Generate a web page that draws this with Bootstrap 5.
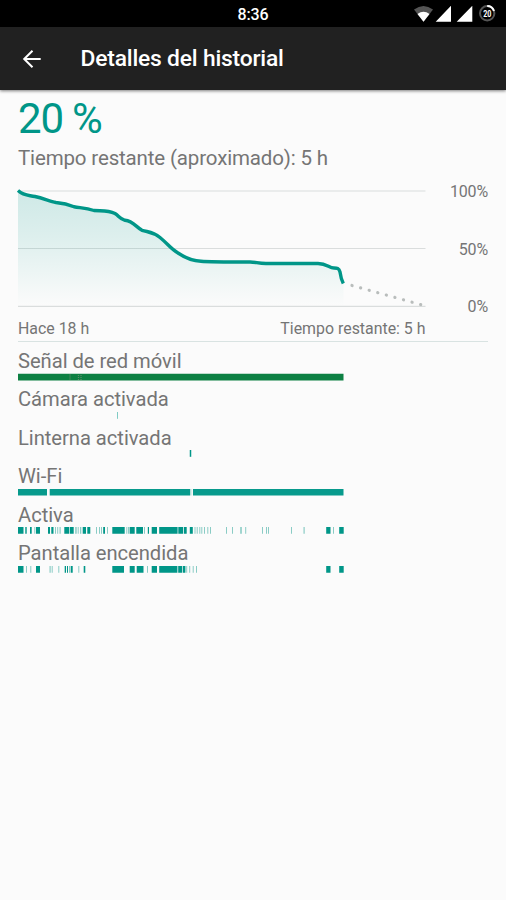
<!DOCTYPE html>
<html lang="es">
<head>
<meta charset="utf-8">
<meta name="viewport" content="width=device-width, initial-scale=1">
<title>Detalles del historial</title>
<link href="https://cdn.jsdelivr.net/npm/bootstrap@5.3.0/dist/css/bootstrap.min.css" rel="stylesheet">
<style>
body{font-family:Roboto,"Noto Sans",sans-serif;background:#fbfbfb;color:#757575;min-height:900px;overflow:hidden}
.status-bar{height:27px;background:#000;color:#fff;display:grid;grid-template-columns:1fr auto 1fr;font-size:16px;font-weight:500;line-height:29px;letter-spacing:-.15px}
.app-bar{height:63px;background:#212121;color:#fff;box-shadow:0 1px 3px rgba(0,0,0,.5);padding-left:18px}
.app-title{font-size:22.8px;font-weight:500;line-height:64px;margin:0 0 0 34.5px;letter-spacing:-.18px}
.content{padding:0 18px}
.level{font-size:42px;line-height:50px;color:#009688;padding-top:4px;letter-spacing:-1.2px}
.remain{font-size:20.5px;line-height:28px;letter-spacing:-.15px}
.chart-area{height:135px}
.chart-area svg{width:408px;height:135px;overflow:visible}
.axis{font-size:16px;line-height:19px;padding-top:10px;height:135px;letter-spacing:-.15px}
.axis div+div{margin-top:38.6px}
.range{font-size:15.9px;line-height:24px;height:34px;width:407.5px;padding-top:10px}
.divider{height:1px;background:#d9e3e2}
.event{height:38.45px}
.event-name{font-size:20.2px;line-height:31px;height:31.5px;padding-top:4px;letter-spacing:-.04px}
.event svg{display:block;overflow:visible}
</style>
<script src="https://cdn.jsdelivr.net/npm/bootstrap@5.3.0/dist/js/bootstrap.bundle.min.js"></script>
</head>
<body>
<div class="status-bar">
  <span></span><span>8:36</span>
  <svg width="106" height="27" viewBox="400 0 106 27" class="ms-auto" aria-hidden="true">
    <path d="M414 9.500Q423.500 2.500 433 9.500L423.500 21.700Z" fill="#555"/>
    <path d="M417.500 14Q423.500 9.500 429.500 14L423.500 21.700Z" fill="#fff"/>
    <path d="M451 5.700V21.700H435.700ZM472.300 5.700V21.700H456.700Z" fill="#fff"/>
    <circle cx="487.200" cy="13.300" r="7.200" fill="none" stroke="#555" stroke-width="2"/>
    <path d="M487.200 6.100A7.200 7.200 0 0 1 494 11" fill="none" stroke="#fff" stroke-width="2"/>
    <text x="487.300" y="16.700" text-anchor="middle" font-size="9.200" font-weight="700" fill="#fff" textLength="8" lengthAdjust="spacingAndGlyphs">20</text>
  </svg>
</div>
<header class="app-bar d-flex align-items-center">
  <svg width="28" height="28" viewBox="18 45 28 28" fill="none" stroke="#fff" stroke-width="2" aria-label="Atrás"><path d="M40.700 59H24.500M32.500 50.700L24.200 59L32.500 67.300"/></svg>
  <h1 class="app-title">Detalles del historial</h1>
</header>
<main class="content">
  <div class="level">20 %</div>
  <div class="remain">Tiempo restante (aproximado): 5 h</div>
  <div class="chart-area d-flex justify-content-between">
    <svg viewBox="18 172 408 135" aria-hidden="true">
      <defs><linearGradient id="fade" gradientUnits="userSpaceOnUse" x1="0" y1="190" x2="0" y2="306"><stop offset="0" stop-color="#009688" stop-opacity=".18"/><stop offset=".4" stop-color="#009688" stop-opacity=".12"/><stop offset="1" stop-color="#009688" stop-opacity="0"/></linearGradient></defs>
      <path d="M18 191H425.500M18 248.500H425.500M18 306.300H425.500" stroke="#dadddd" stroke-width="1.200"/>
      <path d="M18 190.500C24 196 28 195 35 196.500C44 198.500 50 201.500 56 202.500C61 203 66 203.500 74 206.800C81 208 86 208 94 210.500C103 211 108 210 115 213.500C119 216 120 219 125 220.300C133 221 136 227 142 230.300C150 232.500 153 232 160 237.500C168 244 171 249 178 253C187 259 194 261 201 261.200C209 262 216 262 250 262C256 262 258 263.500 266 263.500H318C327 263.500 329 268 334 268C337 268 339 268 340 272Q341 279 343.500 283.500V306H18Z" fill="url(#fade)"/>
      <path d="M18 190.500C24 196 28 195 35 196.500C44 198.500 50 201.500 56 202.500C61 203 66 203.500 74 206.800C81 208 86 208 94 210.500C103 211 108 210 115 213.500C119 216 120 219 125 220.300C133 221 136 227 142 230.300C150 232.500 153 232 160 237.500C168 244 171 249 178 253C187 259 194 261 201 261.200C209 262 216 262 250 262C256 262 258 263.500 266 263.500H318C327 263.500 329 268 334 268C337 268 339 268 340 272Q341 279 343.300 283.500" fill="none" stroke="#009688" stroke-width="3.400" stroke-linejoin="round"/>
      <path d="M352 285.500L424 305.500" fill="none" stroke="#b9bdbc" stroke-width="3.200" stroke-linecap="round" stroke-dasharray=".1 8.800"/>
    </svg>
    <div class="axis text-end"><div>100%</div><div>50%</div><div>0%</div></div>
  </div>
  <div class="range d-flex justify-content-between"><span>Hace 18 h</span><span>Tiempo restante: 5 h</span></div>
  <div class="divider"></div>

  <section class="event"><div class="event-name">Señal de red móvil</div>
    <svg width="326" height="7" viewBox="18 0 326 7"><path d="M18 3.100H343.500" stroke="#0d8043" stroke-width="6.600"/><path d="M70 .6V6.500M78.500 1V6.500M81 1V6.500" stroke="#5f8a6a" stroke-width="1.300" stroke-dasharray="1 1"/></svg></section>
  <section class="event"><div class="event-name">Cámara activada</div>
    <svg width="326" height="7" viewBox="18 0 326 7"><path d="M117.500 0V6.800" stroke="#80cbc4"/></svg></section>
  <section class="event"><div class="event-name">Linterna activada</div>
    <svg width="326" height="7" viewBox="18 0 326 7"><path d="M190.500 0V6.800" stroke="#009688" stroke-width="1.500"/></svg></section>
  <section class="event"><div class="event-name">Wi-Fi</div>
    <svg width="326" height="7" viewBox="18 0 326 7"><path d="M18 3.200H47M49.700 3.200H190.300M193 3.200H343.500" stroke="#079a8c" stroke-width="6.600"/><path d="M191.700 0V6.500" stroke="#c3e2df" stroke-width=".8"/></svg></section>
  <section class="event"><div class="event-name">Activa</div>
    <svg width="326" height="7" viewBox="18 0 326 7" stroke-width="6.600"><path d="M18 3.400H23.500M25.300 3.400H26.700M30 3.400H31.700M36 3.400H40M48 3.400H50M51.300 3.400H53.500M64.300 3.400H69M69.700 3.400H73.700M82.700 3.400H86M87.300 3.400H90.300M103.200 3.400H105M112.300 3.400H124.700M129.700 3.400H134.700M136.300 3.400H143M147.800 3.400H149M151.700 3.400H157M159.200 3.400H177.600M178.300 3.400H183.200M184 3.400H186.700M189.800 3.400H192.800M326.200 3.400H330.500M339.200 3.400H343.700" stroke="#009688"/><path d="M34.300 3.400H35.300M55 3.400H56M57.200 3.400H58.200M59.500 3.400H60.700M75.200 3.400H76.700M77.700 3.400H78.700M80 3.400H81.300M96 3.400H97M99 3.400H100M101 3.400H102M107 3.400H108M126.300 3.400H127.300M128 3.400H129.300M144 3.400H145M194.500 3.400H195.500M196.700 3.400H197.700M199.300 3.400H200.300M201.300 3.400H202.300M204 3.400H205M207.300 3.400H208.300M210 3.400H211M226 3.400H227M232 3.400H233M240.200 3.400H241.800M245.200 3.400H246.200M262 3.400H263M266 3.400H267M268 3.400H269M291 3.400H292M303.500 3.400H304.700M333 3.400H334" stroke="#8accc5"/></svg></section>
  <section class="event"><div class="event-name">Pantalla encendida</div>
    <svg width="326" height="7" viewBox="18 0 326 7" stroke-width="6.600"><path d="M18 3.400H23.500M36 3.400H40M64.700 3.400H66M67 3.400H68M70.700 3.400H72.700M83.700 3.400H85.300M112.300 3.400H124M129.700 3.400H134.700M136.700 3.400H143.500M151.700 3.400H157M159.200 3.400H177.400M178.200 3.400H182M182.700 3.400H185.400M326.200 3.400H330.500M339.200 3.400H343.700" stroke="#009688"/><path d="M26 3.400H27M30.300 3.400H31.300M49.500 3.400H50.700M51.700 3.400H52.700M58.300 3.400H59.300M69 3.400H70M78.300 3.400H79.300M147 3.400H148M186.200 3.400H187.200M189.200 3.400H190.200M192.700 3.400H193.700M196 3.400H197" stroke="#8accc5"/></svg></section>
</main>
</body>
</html>
